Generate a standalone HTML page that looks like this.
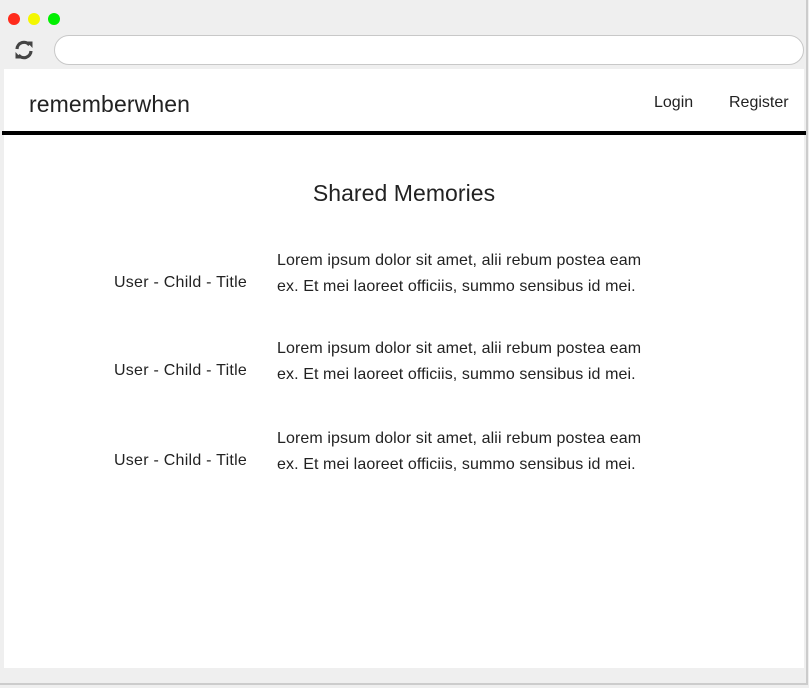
<!DOCTYPE html>
<html><head><meta charset="utf-8"><style>
*{margin:0;padding:0;box-sizing:border-box}
body{width:809px;height:688px;background:#efefef;font-family:"Liberation Sans",Arial,sans-serif;color:#222;position:relative;overflow:hidden}
.frame{position:absolute;left:0;top:0;width:808px;height:685px;border-right:2px solid #ccc;border-bottom:2px solid #ccc}
.dot{position:absolute;top:13px;width:12px;height:12px;border-radius:50%}
.url{position:absolute;left:54px;top:35px;width:750px;height:30px;border:1px solid #c8c8c8;border-radius:15px;background:#fff}
.page{position:absolute;left:4px;top:69px;width:800px;height:599px;background:#fff}
.brand{position:absolute;left:25px;top:22px;font-size:23px;color:#222;letter-spacing:0.1px}
.nav{position:absolute;top:25px;font-size:16px}
.rule{position:absolute;left:-2px;top:62px;width:804px;height:4px;background:#000}
h1{position:absolute;left:0;width:800px;text-align:center;top:111px;font-size:23px;font-weight:normal;letter-spacing:0.05px}
.row{position:absolute;left:0;width:800px;font-size:16px;line-height:26px;letter-spacing:0.1px}
.l{position:absolute;left:110px;top:24px;letter-spacing:0.25px}
.r{position:absolute;left:273px;top:2px;width:390px}
</style></head><body>
<div class="frame"></div>
<div class="dot" style="left:8px;background:#ff2b1c"></div>
<div class="dot" style="left:28px;background:#f4f700"></div>
<div class="dot" style="left:48px;background:#00ef00"></div>
<svg style="position:absolute;left:14px;top:40px" width="20" height="20" viewBox="0 0 20 20"><g fill="none" stroke="#444" stroke-width="3.2"><path d="M3 9A7 7 0 0 1 15.5 5"/><path d="M17 11A7 7 0 0 1 4.5 15"/></g><path d="M12.5 1.5L18.5 1.5L18.5 8Z" fill="#444"/><path d="M7.5 18.5L1.5 18.5L1.5 12Z" fill="#444"/></svg>
<div class="url"></div>
<div class="page">
<div class="brand">rememberwhen</div>
<div class="nav" style="left:650px">Login</div>
<div class="nav" style="left:725px">Register</div>
<div class="rule"></div>
<h1>Shared Memories</h1>
<div class="row" style="top:177px"><div class="l">User - Child - Title</div><div class="r">Lorem ipsum dolor sit amet, alii rebum postea eam<br>ex. Et mei laoreet officiis, summo sensibus id mei.</div></div>
<div class="row" style="top:265px"><div class="l">User - Child - Title</div><div class="r">Lorem ipsum dolor sit amet, alii rebum postea eam<br>ex. Et mei laoreet officiis, summo sensibus id mei.</div></div>
<div class="row" style="top:355px"><div class="l">User - Child - Title</div><div class="r">Lorem ipsum dolor sit amet, alii rebum postea eam<br>ex. Et mei laoreet officiis, summo sensibus id mei.</div></div>
</div>
</body></html>
